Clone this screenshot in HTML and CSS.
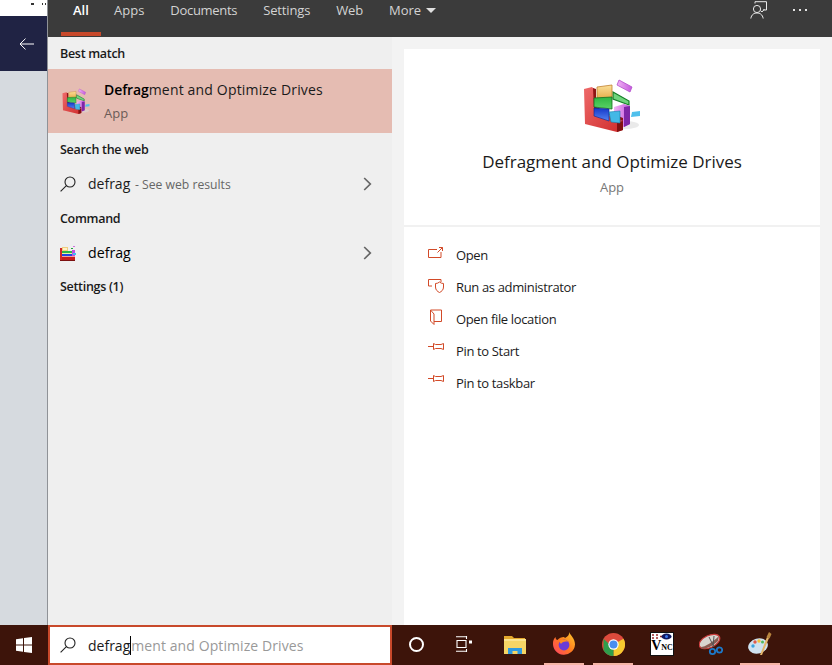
FILE: index.html
```html
<!DOCTYPE html>
<html lang="en">
<head>
<meta charset="utf-8">
<title>Search</title>
<link rel="stylesheet" href="styles.css">
</head>
<body>
<svg class="defs" width="0" height="0" aria-hidden="true">
  <defs>
    <linearGradient id="gRed" x1="0" y1="0" x2="1" y2="1"><stop offset="0" stop-color="#ee6a6a"/><stop offset="1" stop-color="#cf2c2c"/></linearGradient>
    <linearGradient id="gYel" x1="0" y1="0" x2="0" y2="1"><stop offset="0" stop-color="#fbe09a"/><stop offset="1" stop-color="#e6ac48"/></linearGradient>
    <linearGradient id="gGrn" x1="0" y1="0" x2="0" y2="1"><stop offset="0" stop-color="#2fb542"/><stop offset="1" stop-color="#5bd266"/></linearGradient>
    <linearGradient id="gBlu" x1="0" y1="0" x2="0" y2="1"><stop offset="0" stop-color="#1536c8"/><stop offset="1" stop-color="#5585f2"/></linearGradient>
    <linearGradient id="gPur" x1="0" y1="0" x2="1" y2="0"><stop offset="0" stop-color="#f0b4f4"/><stop offset="1" stop-color="#c458dc"/></linearGradient>
    <symbol id="defrag" viewBox="0 0 58 54">
      <ellipse cx="42" cy="47" rx="14" ry="4" fill="#d8d8d8" opacity=".55"/>
      <polygon points="36,2 49,9 47,14 34,7" fill="url(#gPur)" stroke="#b24ccc" stroke-width=".8"/>
      <polygon points="49,34 57,33 57,38 48,39" fill="#4fc0ec"/>
      <polygon points="30,14 46,23 46,27 30,21" fill="#6fd47c" stroke="#147f26" stroke-width="1.2"/>
      <polygon points="31,29 41,26 47,28 47,46 41,49 31,46" fill="url(#gPur)"/>
      <polygon points="41,29 47,28 47,46 41,49" fill="#7e26a6"/>
      <polygon points="14,9 29,7 29,20 14,21" fill="url(#gYel)" stroke="#c08030" stroke-width=".8"/>
      <polygon points="1,11 9,9 11,11 11,31 40,43 40,52 34,54 2,46" fill="url(#gRed)"/>
      <polygon points="10,10 13,11 13,29 40,40 40,43 11,31" fill="#8e1414"/>
      <polygon points="34,45 40,43 40,52 34,54" fill="#821010"/>
      <polygon points="11,20 29,19 29,31 11,29" fill="url(#gGrn)" stroke="#14701f" stroke-width=".8"/>
      <polygon points="11,30 26,31 26,43 11,38" fill="url(#gBlu)" stroke="#0d2488" stroke-width=".6"/>
      <polygon points="26,34 37,33 37,45 28,44" fill="#43b8e6" stroke="#1380ac" stroke-width=".6"/>
    </symbol>
    <symbol id="defrag-small" viewBox="0 0 16 15">
      <g shape-rendering="crispEdges">
        <rect x="13" y="0" width="2" height="1" fill="#d070e0"/>
        <rect x="11" y="2" width="2" height="1" fill="#20a040"/>
        <rect x="2" y="1" width="6" height="4" fill="#f0cf80"/>
        <rect x="3" y="2" width="4" height="2" fill="#fff2c8"/>
        <rect x="0" y="2" width="2" height="12" fill="#d02828"/>
        <rect x="2" y="5" width="11" height="2" fill="#2eb846"/>
        <rect x="2" y="7" width="11" height="1" fill="#e8f8a0"/>
        <rect x="2" y="8" width="11" height="2" fill="#2048e0"/>
        <rect x="12" y="4" width="3" height="6" fill="#c050e0"/>
        <rect x="13" y="7" width="3" height="2" fill="#40c0f0"/>
        <rect x="2" y="10" width="13" height="1" fill="#f4a0a0"/>
        <rect x="2" y="11" width="13" height="3" fill="#c81c1c"/>
        <rect x="0" y="14" width="15" height="1" fill="#7c1010"/>
      </g>
    </symbol>
    <symbol id="lens" viewBox="0 0 16 16">
      <circle cx="10" cy="6" r="5" fill="none" stroke="currentColor" stroke-width="1.1"/>
      <path d="M6.4 9.6 L0.6 15.4" fill="none" stroke="currentColor" stroke-width="1.1"/>
    </symbol>
    <symbol id="chev" viewBox="0 0 9 14">
      <path d="M1.2 1 L7.3 7 L1.2 13" fill="none" stroke="currentColor" stroke-width="1.7"/>
    </symbol>
  </defs>
</svg>

<div class="screen">
  <aside class="rail">
    <div class="rail-top">
      <svg width="18" height="3" viewBox="0 0 18 3"><path d="M2 0 H5 V2 H2 Z M13 0 H14 V2 H13 Z M16 0 H17 V2 H16 Z" fill="#333"/></svg>
    </div>
    <div class="rail-back">
      <svg width="16" height="12" viewBox="0 0 16 12"><path d="M15 6 H1 M6.5 .6 L1 6 L6.5 11.4" fill="none" stroke="#fff" stroke-width="1"/></svg>
    </div>
    <div class="rail-fill"></div>
  </aside>

  <main class="panel">
    <nav class="tabs">
      <a class="tab tab-on">All</a>
      <a class="tab">Apps</a>
      <a class="tab tab-tight">Documents</a>
      <a class="tab tab-snug">Settings</a>
      <a class="tab tab-snug">Web</a>
      <a class="tab">More <i class="caret"></i></a>
      <span class="tab-tools">
        <svg class="tool-feedback" width="18" height="18" viewBox="0 0 18 18"><g fill="none" stroke="#e8e8e8" stroke-width="1"><circle cx="7" cy="8" r="3.6"/><path d="M.8 17.5 C1.5 13.5 4 12 7 12 C10 12 12.5 13.5 13.2 17.5"/><path d="M5 2.5 V.7 H16.5 V9 H13 M10.5 9.5 L12 11 L14.5 8"/></g></svg>
        <span class="tool-dots"><b></b><b></b><b></b></span>
      </span>
    </nav>

    <div class="content">
      <section class="results">
        <h2 class="group first">Best match</h2>
        <div class="best">
          <svg class="best-icon"><use href="#defrag"/></svg>
          <div class="best-text">
            <div class="best-title"><strong>Defrag</strong>ment and Optimize Drives</div>
            <div class="best-sub">App</div>
          </div>
        </div>
        <h2 class="group">Search the web</h2>
        <div class="row">
          <svg class="row-icon lens"><use href="#lens"/></svg>
          <span class="row-text">defrag <small>- See web results</small></span>
          <svg class="chev"><use href="#chev"/></svg>
        </div>
        <h2 class="group">Command</h2>
        <div class="row">
          <svg class="row-icon"><use href="#defrag-small"/></svg>
          <span class="row-text medium">defrag</span>
          <svg class="chev"><use href="#chev"/></svg>
        </div>
        <h2 class="group last">Settings (1)</h2>
      </section>

      <section class="detail">
        <div class="card">
          <header class="hero">
            <svg class="hero-icon"><use href="#defrag"/></svg>
            <div class="hero-title">Defragment and Optimize Drives</div>
            <div class="hero-sub">App</div>
          </header>
          <ul class="actions">
            <li><svg class="act" viewBox="0 0 18 18"><path d="M10 5.500 H1.500 V13.500 H14 V8 M10.500 8.500 L15.500 3.500 M12 3.500 H15.500 V7" fill="none" stroke="currentColor"/></svg>Open</li>
            <li><svg class="act" viewBox="0 0 18 18"><path d="M5 10 H1.500 V3.500 H14 V6 M8.500 7.500 C10 7.500 11.500 7 12.500 6 C13.500 7 15 7.500 16.500 7.500 V11 C16.500 14 14.500 15.500 12.500 16.500 C10.500 15.500 8.500 14 8.500 11 Z" fill="none" stroke="currentColor"/></svg>Run as administrator</li>
            <li><svg class="act" viewBox="0 0 18 18"><path d="M3.500 2 H14.500 V13.500 H7 M3.500 2 V13 L7 16.500 V6 L3.500 2" fill="none" stroke="currentColor"/></svg>Open file location</li>
            <li><svg class="act" viewBox="0 0 18 18"><path d="M1 6.500 H6.500 M6.500 3.500 L8.500 4.500 H14 L16.500 3.500 V9.500 L14 8.500 H8.500 L6.500 9.500 Z" fill="none" stroke="currentColor"/></svg>Pin to Start</li>
            <li><svg class="act" viewBox="0 0 18 18"><path d="M1 6.500 H6.500 M6.500 3.500 L8.500 4.500 H14 L16.500 3.500 V9.500 L14 8.500 H8.500 L6.500 9.500 Z" fill="none" stroke="currentColor"/></svg>Pin to taskbar</li>
          </ul>
        </div>
      </section>
    </div>
  </main>
</div>

<footer class="taskbar">
  <div class="start">
    <svg width="16" height="16" viewBox="0 0 16 16"><path d="M0 2.3 L7 1.2 V7.4 H0 Z M8 1 L16 0 V7.4 H8 Z M0 8.5 H7 V14.8 L0 13.7 Z M8 8.5 H16 V16 L8 15 Z" fill="#fff"/></svg>
  </div>
  <div class="searchbox">
    <svg class="box-lens"><use href="#lens"/></svg>
    <span class="typed">defrag</span><span class="cursor"></span><span class="hint">ment and Optimize Drives</span>
  </div>
  <div class="tray">
    <span class="cell system"><i class="ring"></i></span>
    <span class="cell system">
      <svg width="16" height="16" viewBox="0 0 16 16"><g fill="none" stroke="#fff" stroke-width="1.1"><path d="M0 .8 H11 M0 15.2 H11 M1 4.500 H10 V11.500 H1 Z M10.500 0 V3 M10.500 13 V16"/></g><rect x="13" y="4.500" width="3" height="3" fill="#fff"/></svg>
    </span>
    <div class="apps">
      <span class="cell app">
        <svg width="22" height="19" viewBox="0 0 22 19"><path d="M0 1 H8 L10 3 H21 V6 H0 Z" fill="#e3a82d"/><rect y="4" width="22" height="15" fill="#f6d565"/><rect y="4" width="22" height="2" fill="#fbe38e"/><path d="M4 19 V13 H18 V19 H13.500 V16 H8.500 V19 Z" fill="#2f9ae0"/></svg>
      </span>
      <span class="cell app on">
        <svg width="24" height="24" viewBox="0 0 24 24"><defs><linearGradient id="fx" x1="0" y1="1" x2="1" y2="0"><stop offset="0" stop-color="#ff3d6a"/><stop offset=".5" stop-color="#ff7a1f"/><stop offset="1" stop-color="#ffd02e"/></linearGradient></defs><path d="M17 0 C18 3 23 6 23 12.500 A11 11 0 1 1 1 11 C1 8.500 2 6.500 3.500 5 C3.500 7 4.500 8 5.500 8 C7 6 9.500 5 12 5 L13 6 C16 4 17.500 3 17 0 Z" fill="url(#fx)"/><circle cx="12" cy="13" r="5.400" fill="#6a3bd6"/><path d="M7 9 C10 7 14 7 16 10 C13 9 10 10 9 12 Z" fill="#ff8a1f"/></svg>
      </span>
      <span class="cell app on">
        <svg width="23" height="23" viewBox="0 0 24 24"><circle cx="12" cy="12" r="12" fill="#dd4a3c"/><path d="M12 12 L22.400 6 A12 12 0 0 1 12 24 Z" fill="#f6c92f"/><path d="M12 12 L12 24 A12 12 0 0 1 1.600 18 L1.600 6 L8 12 Z" fill="#2f9e4c"/><circle cx="12" cy="12" r="5.400" fill="#fff"/><circle cx="12" cy="12" r="4.200" fill="#4a8df0"/></svg>
      </span>
      <span class="cell app">
        <span class="vnc-box">
          <svg class="vnc-eye" width="22" height="7" viewBox="0 0 22 7"><path d="M1 2 H3 M1 5 H3 M5 2 H7 M5 5 H7 M9 3.500 H11" stroke="#9c2a2a" stroke-width="1.500"/><ellipse cx="15.500" cy="3.500" rx="5" ry="3" fill="#101860"/><circle cx="15.500" cy="3.500" r="1.500" fill="#3c78f0"/></svg>
          <span class="vnc-name">V<small>NC</small></span>
          <i class="vnc-line"></i>
        </span>
      </span>
      <span class="cell app">
        <svg width="24" height="23" viewBox="0 0 24 23"><ellipse cx="10.500" cy="8.500" rx="11" ry="6" transform="rotate(-25 10.500 8.500)" fill="#d9d5d0" stroke="#c83a3a" stroke-width="1.200"/><path d="M2 14 C6 14 14 9 20 3 L19 8 C14 13 7 16 3 16 Z" fill="#8a5a50"/><path d="M10 4 L15 14 M15 3 L14 14" stroke="#555" stroke-width="1"/><g fill="none" stroke="#1d78c8" stroke-width="1.800"><circle cx="13.500" cy="18.500" r="2.700"/><circle cx="20.500" cy="17" r="2.700"/></g></svg>
      </span>
      <span class="cell app on">
        <svg width="24" height="24" viewBox="0 0 24 24"><ellipse cx="10" cy="14" rx="10" ry="7.500" transform="rotate(-15 10 14)" fill="#cfe2f0"/><circle cx="5" cy="14" r="1.700" fill="#3aa3e0"/><circle cx="7" cy="10" r="1.700" fill="#e25b4a"/><circle cx="11" cy="9" r="1.700" fill="#f2c13a"/><circle cx="14.500" cy="10" r="1.500" fill="#52b85a"/><path d="M12 23 L19 5 L21 6 L14 23 Z" fill="#e5b56a"/><path d="M18.500 5 L21 0 L23.500 2 L21.500 6.500 Z" fill="#b9853e"/></svg>
      </span>
    </div>
  </div>
</footer>
</body>
</html>
```

FILE: styles.css
```css
* { box-sizing: border-box; }
html, body { margin: 0; padding: 0; }
body {
  width: 832px;
  height: 665px;
  overflow: hidden;
  display: flex;
  flex-direction: column;
  font-family: "Open Sans", "Noto Sans", "Liberation Sans", sans-serif;
  color: #111;
  background: #f3f3f3;
}
.defs { position: absolute; }

.screen { display: flex; height: 625px; }

.rail {
  width: 48px;
  flex: none;
  display: flex;
  flex-direction: column;
  border-right: 1px solid #8f9297;
}
.rail-top { height: 16px; background: #fff; overflow: hidden; padding-left: 29px; line-height: 0; }
.rail-back {
  height: 55px;
  background: #202344;
  display: flex;
  align-items: center;
  justify-content: center;
  padding-left: 6px;
}
.rail-fill { flex: 1; background: #d6dadf; }

.panel { flex: 1; display: flex; flex-direction: column; min-width: 0; }

.tabs {
  height: 37px;
  flex: none;
  background: #3b3b3b;
  display: flex;
  gap: 2px;
  padding-left: 13px;
  color: #d3d3d3;
  font-size: 13px;
}
.tab {
  padding: 0 12px;
  height: 36px;
  line-height: 21px;
  white-space: nowrap;
}
.tab-tight { letter-spacing: -.3px; }
.tab-snug { letter-spacing: -.15px; }
.tab-on {
  width: 40px;
  margin-right: -1px;
  color: #fff;
  font-weight: 600;
  border-bottom: 4px solid #c8492b;
}
.caret {
  display: inline-block;
  width: 0;
  height: 0;
  margin-left: 1px;
  border-left: 5px solid transparent;
  border-right: 5px solid transparent;
  border-top: 5px solid #e0e0e0;
  vertical-align: 2px;
}
.tab-tools {
  margin-left: auto;
  padding-right: 25px;
  display: flex;
  gap: 25px;
  height: 20px;
  align-items: center;
}
.tool-dots { display: flex; gap: 4px; }
.tool-dots b { width: 2px; height: 2px; background: #e4e4e4; }

.content { flex: 1; display: flex; min-height: 0; }

.results { width: 344px; flex: none; background: #efefef; padding-top: 7px; }
.group {
  margin: 0;
  padding-left: 12px;
  font-size: 12.5px;
  letter-spacing: -.3px;
  line-height: 18px;
  font-weight: 600;
  color: #1a1a1a;
  height: 35px;
  padding-top: 8px;
}
.group.first { height: 25px; padding-top: 1px; }
.group.last { padding-top: 7px; }

.best {
  height: 64px;
  background: #e5bcb2;
  display: flex;
  align-items: center;
  padding-left: 14px;
  gap: 14px;
}
.best-icon { width: 28px; height: 28px; flex: none; }
.best-title { font-size: 14px; letter-spacing: .17px; line-height: 20px; color: #1a1a1a; }
.best-title strong { font-weight: 600; color: #000; letter-spacing: -.1px; }
.best-sub { font-size: 13px; line-height: 18px; margin-top: 4px; color: #6b5b57; }

.row {
  height: 34px;
  display: flex;
  align-items: center;
  padding: 0 20px 3px 12px;
}
.row-icon { width: 16px; height: 16px; flex: none; margin-right: 12px; color: #222; }
.row-text { font-size: 14px; color: #1c1c1c; flex: 1; }
.row-text small { font-size: 12.2px; margin-left: 1px; color: #666; }
.row-text.medium { font-weight: 500; font-size: 14.2px; color: #000; }
.chev { width: 9px; height: 14px; color: #666; flex: none; }

.detail { flex: 1; background: #f3f3f3; padding: 12px 12px 0; display: flex; }
.card { flex: 1; background: #fff; display: flex; flex-direction: column; }
.hero {
  height: 178px;
  flex: none;
  border-bottom: 2px solid #f1f1f1;
  display: flex;
  flex-direction: column;
  align-items: center;
  padding-top: 29px;
}
.hero-icon { width: 58px; height: 54px; }
.hero-title { margin-top: 18px; font-size: 17px; line-height: 24px; color: #1a1a1a; }
.hero-sub { margin-top: 4px; font-size: 13px; line-height: 18px; color: #777; }

.actions {
  list-style: none;
  margin: 0;
  padding: 12px 0 0 23px;
  font-size: 13px;
  letter-spacing: -.35px;
  color: #1c1c1c;
}
.actions li { height: 32px; display: flex; align-items: center; gap: 11px; }
.act { width: 18px; height: 18px; flex: none; color: #d24a28; margin-top: -4px; }

.taskbar {
  height: 40px;
  flex: none;
  background: #3d140a;
  display: flex;
}
.start { width: 48px; display: flex; align-items: center; justify-content: center; }
.searchbox {
  width: 344px;
  background: #fff;
  border: 2px solid #c8492b;
  display: flex;
  align-items: center;
  padding-left: 10px;
  font-size: 14px;
}
.box-lens { width: 16px; height: 16px; margin-right: 12px; color: #222; flex: none; }
.typed { color: #1a1a1a; }
.cursor { width: 1px; height: 19px; background: #000; }
.hint { color: #999; letter-spacing: .09px; }

.tray { flex: 1; display: flex; }
.apps { display: flex; gap: 9px; margin-left: 7px; }
.cell {
  height: 40px;
  width: 40px;
  flex: none;
  display: flex;
  align-items: center;
  justify-content: center;
  padding-bottom: 2px;
}
.cell.system { width: 48px; }
.ring { width: 15px; height: 15px; border-radius: 50%; border: 2px solid #fff; }
.app.on { box-shadow: inset 0 -2px 0 #f6b5a6; }
.vnc-box {
  width: 24px;
  height: 24px;
  background: #fff;
  border: 1px solid #111;
  display: flex;
  flex-direction: column;
  align-items: center;
  overflow: hidden;
  font-family: "Liberation Serif", serif;
  color: #000;
}
.vnc-eye { flex: none; display: block; }
.vnc-name { display: block; font-size: 14px; line-height: 12px; font-weight: 700; }
.vnc-name small { font-size: 8px; }
.vnc-line { display: block; flex: none; width: 18px; height: 1px; margin-top: 1px; background: #d01818; }
```
